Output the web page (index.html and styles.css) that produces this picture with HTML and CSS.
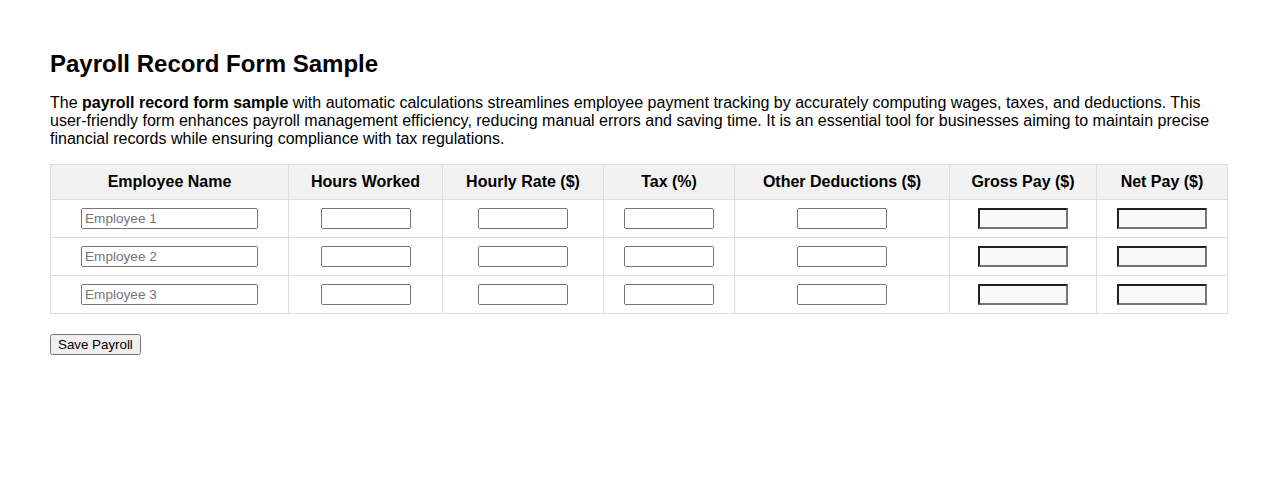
FILE: index.html
```html
<!DOCTYPE html>
<html>
<head>
<meta charset="utf-8">
<title>Payroll Record Form Sample</title>
<link rel="stylesheet" href="styles.css">
</head>
<body>
<h1 class="title">Payroll Record Form Sample</h1>
<p class="intro">The <strong>payroll record form sample</strong> with automatic calculations streamlines employee payment tracking by accurately computing wages, taxes, and deductions. This user-friendly form enhances payroll management efficiency, reducing manual errors and saving time. It is an essential tool for businesses aiming to maintain precise financial records while ensuring compliance with tax regulations.</p>
<table class="payroll">
  <colgroup>
    <col class="c-name"><col class="c-hours"><col class="c-rate"><col class="c-tax"><col class="c-ded"><col class="c-gross"><col class="c-net">
  </colgroup>
  <thead>
    <tr>
      <th>Employee Name</th>
      <th>Hours Worked</th>
      <th>Hourly Rate ($)</th>
      <th>Tax (%)</th>
      <th>Other Deductions ($)</th>
      <th>Gross Pay ($)</th>
      <th>Net Pay ($)</th>
    </tr>
  </thead>
  <tbody>
    <tr>
      <td><input class="name" type="text" placeholder="Employee 1"></td>
      <td><input class="num" type="number"></td>
      <td><input class="num" type="number"></td>
      <td><input class="num" type="number"></td>
      <td><input class="num" type="number"></td>
      <td><input class="num out" type="number" readonly></td>
      <td><input class="num out" type="number" readonly></td>
    </tr>
    <tr>
      <td><input class="name" type="text" placeholder="Employee 2"></td>
      <td><input class="num" type="number"></td>
      <td><input class="num" type="number"></td>
      <td><input class="num" type="number"></td>
      <td><input class="num" type="number"></td>
      <td><input class="num out" type="number" readonly></td>
      <td><input class="num out" type="number" readonly></td>
    </tr>
    <tr>
      <td><input class="name" type="text" placeholder="Employee 3"></td>
      <td><input class="num" type="number"></td>
      <td><input class="num" type="number"></td>
      <td><input class="num" type="number"></td>
      <td><input class="num" type="number"></td>
      <td><input class="num out" type="number" readonly></td>
      <td><input class="num out" type="number" readonly></td>
    </tr>
  </tbody>
</table>
<button class="save" type="button">Save Payroll</button>
</body>
</html>
```
FILE: styles.css
```css
body {
  margin: 0;
  padding: 34px 50px;
  font-family: "Liberation Sans", Arial, sans-serif;
  font-size: 16px;
  color: #000;
  background: #fff;
}
.title {
  font-size: 24px;
  margin: 16px 0;
}
.intro {
  margin: 16px 0;
}
.payroll {
  width: 100%;
  border-collapse: collapse;
  margin-bottom: 20px;
  table-layout: fixed;
}
.c-name { width: 238px; }
.c-hours { width: 154px; }
.c-rate { width: 161px; }
.c-tax { width: 131px; }
.c-ded { width: 215px; }
.c-gross { width: 147px; }
.c-net { width: 131px; }
.payroll th,
.payroll td {
  border: 1px solid #ddd;
  padding: 8px;
  text-align: center;
}
.payroll th {
  background: #f2f2f2;
  font-weight: bold;
}
.payroll td {
  line-height: 0;
  padding: 8px;
}
.payroll input {
  box-sizing: border-box;
  height: 21px;
  vertical-align: middle;
  font-family: "Liberation Sans", Arial, sans-serif;
  font-size: 13.6px;
  line-height: normal;
}
.name { width: 177px; }
.num { width: 90px; }
.out { background-color: #f9f9f9; }
.save {
  font-family: "Liberation Sans", Arial, sans-serif;
  font-size: 13.333px;
}
```
